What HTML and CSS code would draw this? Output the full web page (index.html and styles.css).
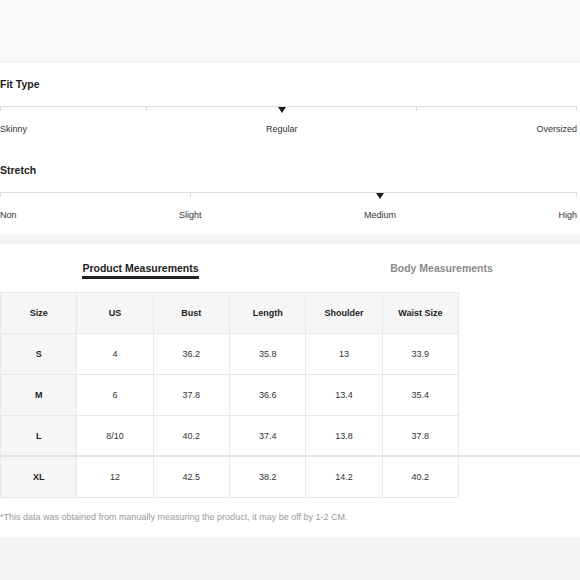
FILE: index.html
```html
<!DOCTYPE html>
<html lang="en">
<head>
<meta charset="utf-8">
<title>Size Guide</title>
<link rel="stylesheet" href="styles.css">
</head>
<body>
<div class="hero"></div>

<section class="attrs">
  <div class="attr">
    <h3 class="attr-title">Fit Type</h3>
    <div class="track">
      <span class="tick tick-start"></span>
      <span class="tick" style="left:25.3%"></span>
      <span class="tick" style="left:72.1%"></span>
      <span class="tick tick-end"></span>
    </div>
    <div class="labels">
      <span class="lbl">Skinny</span>
      <span class="lbl sel">Regular</span>
      <span class="lbl">Oversized</span>
    </div>
  </div>
  <div class="attr">
    <h3 class="attr-title">Stretch</h3>
    <div class="track">
      <span class="tick tick-start"></span>
      <span class="tick" style="left:33%"></span>
      <span class="tick tick-end"></span>
    </div>
    <div class="labels">
      <span class="lbl">Non</span>
      <span class="lbl">Slight</span>
      <span class="lbl sel">Medium</span>
      <span class="lbl">High</span>
    </div>
  </div>
</section>

<div class="band"></div>

<section class="measure">
  <div class="tabs">
    <div class="tab"><span class="tab-text active">Product Measurements</span></div>
    <div class="tab"><span class="tab-text">Body Measurements</span></div>
  </div>

  <div class="table-wrap">
    <table class="sizes">
      <thead>
        <tr><th>Size</th><th>US</th><th>Bust</th><th>Length</th><th>Shoulder</th><th>Waist Size</th></tr>
      </thead>
      <tbody>
        <tr><th>S</th><td>4</td><td>36.2</td><td>35.8</td><td>13</td><td>33.9</td></tr>
        <tr><th>M</th><td>6</td><td>37.8</td><td>36.6</td><td>13.4</td><td>35.4</td></tr>
        <tr><th>L</th><td>8/10</td><td>40.2</td><td>37.4</td><td>13.8</td><td>37.8</td></tr>
        <tr><th>XL</th><td>12</td><td>42.5</td><td>38.2</td><td>14.2</td><td>40.2</td></tr>
      </tbody>
    </table>
  </div>

  <p class="note">*This data was obtained from manually measuring the product, it may be off by 1-2 CM.</p>
</section>

<div class="footer-band"></div>
</body>
</html>
```

FILE: styles.css
```css
html, body {
  margin: 0;
  padding: 0;
  background: #ffffff;
  font-family: "Liberation Sans", Arial, sans-serif;
  color: #222;
}

.hero {
  height: 61px;
  background: #fafafa;
  border-bottom: 1px solid #efefef;
}

.attrs {
  padding: 16px 3px 14px 0;
  display: flex;
  flex-direction: column;
  gap: 29px;
}

.attr-title {
  margin: 0;
  font-size: 10.5px;
  line-height: 13px;
  font-weight: bold;
  color: #222;
}

.track {
  position: relative;
  margin-top: 15px;
  height: 1px;
  background: #dcdcdc;
}

.tick {
  position: absolute;
  top: 0;
  width: 1px;
  height: 5px;
  background: #dcdcdc;
}

.tick-start { left: 0; }
.tick-end { right: 0; }

.labels {
  margin-top: 17px;
  display: flex;
  justify-content: space-between;
  font-size: 9px;
  line-height: 11px;
  color: #333;
}

.lbl {
  position: relative;
}

.lbl.sel::before {
  content: "";
  position: absolute;
  left: 50%;
  top: -17px;
  transform: translateX(-50%);
  width: 0;
  height: 0;
  border-left: 4px solid transparent;
  border-right: 4px solid transparent;
  border-top: 6px solid #1f1f1f;
}

.band {
  height: 9px;
  background: #f5f5f5;
}

.measure {
  padding-top: 18px;
}

.tabs {
  display: grid;
  grid-template-columns: 281px 281px;
  column-gap: 20px;
}

.tab {
  display: flex;
  justify-content: center;
}

.tab-text {
  display: block;
  font-size: 10.5px;
  line-height: 13px;
  font-weight: bold;
  color: #8a8a8a;
  padding-bottom: 1px;
  border-bottom: 3px solid transparent;
}

.tab-text.active {
  color: #222;
  border-bottom-color: #222;
}

.table-wrap {
  position: relative;
  margin-top: 13px;
}

.table-wrap::after {
  content: "";
  position: absolute;
  left: 0;
  right: 0;
  top: 163px;
  height: 2px;
  background: #e3e3e3;
}

.sizes {
  width: 459px;
  table-layout: fixed;
  border-collapse: collapse;
  font-size: 9px;
}

.sizes th,
.sizes td {
  height: 40px;
  padding: 0;
  border: 1px solid #e8e8e8;
  text-align: center;
  vertical-align: middle;
}

.sizes th {
  font-weight: bold;
  color: #222;
}

.sizes td {
  font-weight: normal;
  color: #333;
}

.sizes thead th,
.sizes tbody th {
  background: #f6f6f6;
}

.note {
  margin: 14px 0 0;
  font-size: 9px;
  line-height: 11px;
  color: #9a9a9a;
}

.footer-band {
  margin-top: 14px;
  height: 60px;
  background: #f5f5f5;
}
```
